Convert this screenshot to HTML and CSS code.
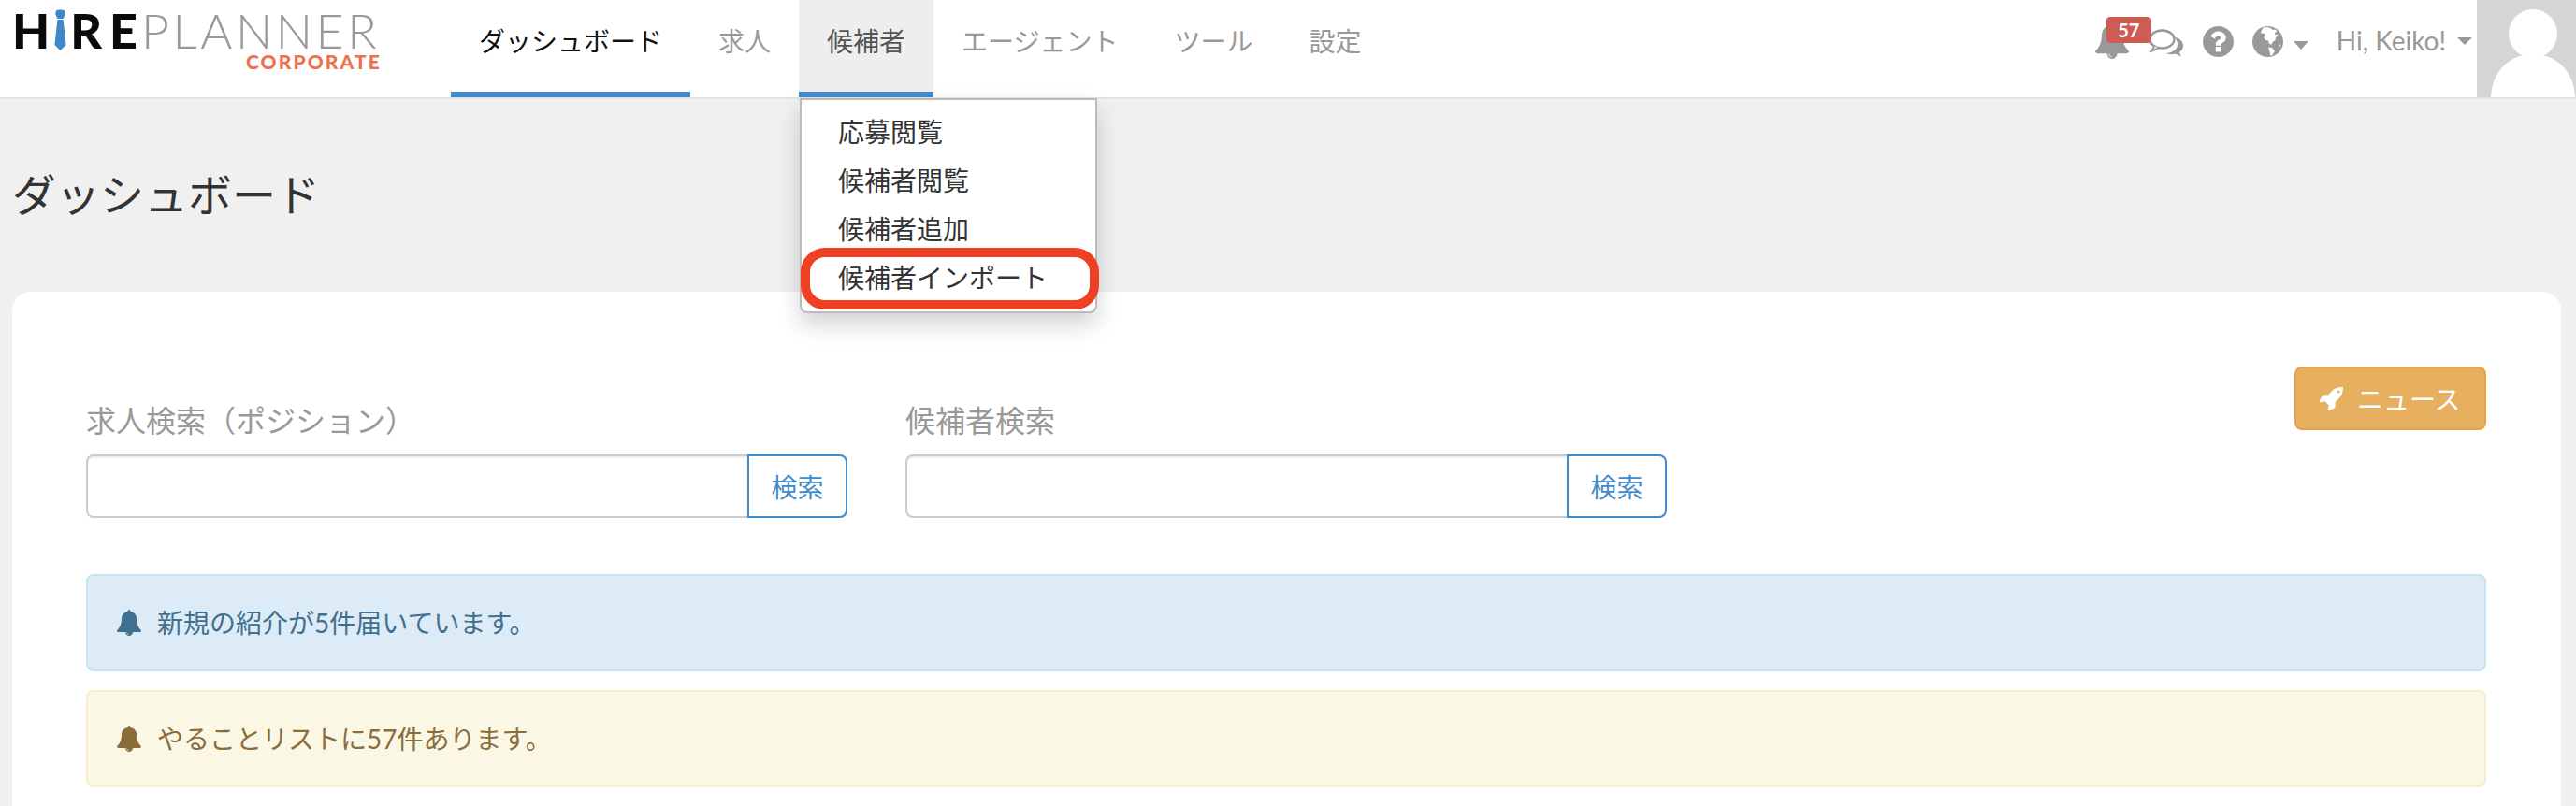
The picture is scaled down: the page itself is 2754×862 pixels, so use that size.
FILE: index.html
```html
<!DOCTYPE html>
<html lang="ja">
<head>
<meta charset="utf-8">
<title>ダッシュボード</title>
<link rel="stylesheet" href="styles.css">
</head>
<body>
<header class="navbar">
  <a class="logo">
    <span class="logo-main"><b class="logo-hire"><span>H</span><svg class="logo-tie" viewBox="0 0 13 44"><path d="M2 1.500C4 .3 9 .3 11 1.500l.8 3.500-2.300 5h-6L1.200 5z" fill="#3f87c8"/><path d="M3.400 11h6.200l3 27-6.100 6-6.100-6z" fill="#3f87c8"/></svg><span class="logo-re">RE</span></b><span class="logo-planner">PLANNER</span></span>
    <span class="logo-sub">CORPORATE</span>
  </a>
  <nav class="tabs">
    <a class="tab tab-current">ダッシュボード</a>
    <a class="tab">求人</a>
    <div class="tab-wrap">
      <a class="tab tab-open">候補者</a>
      <div class="dropdown">
        <a class="dropdown-item">応募閲覧</a>
        <a class="dropdown-item">候補者閲覧</a>
        <a class="dropdown-item">候補者追加</a>
        <a class="dropdown-item">候補者インポート</a>
        <span class="highlight"></span>
      </div>
    </div>
    <a class="tab">エージェント</a>
    <a class="tab">ツール</a>
    <a class="tab">設定</a>
  </nav>
  <div class="nav-right">
    <span class="bell-wrap">
      <svg class="ico-bell" viewBox="64 0 1664 1792"><path fill="#999" d="M912 1696q0-16-16-16-59 0-101.500-42.500t-42.500-101.500q0-16-16-16t-16 16q0 73 51.500 124.500t124.500 51.500q16 0 16-16zm816-288q0 52-38 90t-90 38h-448q0 106-75 181t-181 75-181-75-75-181h-448q-52 0-90-38t-38-90q50-42 91-88t85-119.500 74.500-158.500 50-206 19.500-260q0-152 117-282.500t307-158.500q-8-19-8-39 0-40 28-68t68-28 68 28 28 68q0 20-8 39 190 28 307 158.500t117 282.500q0 139 19.500 260t50 206 74.500 158.500 85 119.500 91 88z"/></svg>
      <span class="badge">57</span>
    </span>
    <svg class="ico-chat" viewBox="0 0 38 30"><path d="M28 9c6 1 9 5 9 9 0 3-1.500 5-4 7l1.500 4.500-6-3c-3 1-7 .8-10-.5 6-.5 12-3 12.500-9 .2-2.800-1-5.500-3-8z" fill="#999"/><ellipse cx="14.500" cy="11" rx="13" ry="9.500" fill="#fff" stroke="#999" stroke-width="2.400"/><path d="M6 18l-2.500 5.500 7-3" fill="#fff" stroke="#999" stroke-width="2"/></svg>
    <svg class="ico-help" viewBox="128 128 1536 1536"><path fill="#999" d="M1024 1376v-192q0-14-9-23t-23-9h-192q-14 0-23 9t-9 23v192q0 14 9 23t23 9h192q14 0 23-9t9-23zm256-672q0-88-55.500-163t-138.500-116-170-41q-243 0-371 213-15 24 8 42l132 100q7 6 19 6 16 0 25-12 53-68 86-92 34-24 86-24 48 0 85.500 26t37.500 59q0 38-20 61t-68 45q-63 28-115.500 86.500t-52.500 125.500v36q0 14 9 23t23 9h192q14 0 23-9t9-23q0-19 21.500-49.500t54.500-49.500q32-18 49-28.500t46-35 44.500-48 28-60.500 12.500-81zm384 192q0 209-103 385.500t-279.500 279.500-385.500 103-385.500-103-279.500-279.500-103-385.500 103-385.500 279.500-279.500 385.500-103 385.500 103 279.500 279.500 103 385.500z"/></svg>
    <svg class="ico-globe" viewBox="0 0 33 33"><circle cx="16.500" cy="16.500" r="16.500" fill="#999"/><path d="M11 1.800c2-.8 4-1 6-.5l3.500 1.200 1 1.500 3-.5 2 2-2.500 1.500.5 2.500 2-1 .8 1.500-2.500 2.500-.3 3-2.500 1-1.500 3-2.500-.5-1-3.500-3-.5-1.800-3 1.500-3-1.500-1.500-2.500.5-.5-2.500 1.500-2zM17 22.500l4 .5 3 3.500-2 3.500-2.500 2-1-4.500zM28.500 20l1.800-.5-1.300 3.500z" fill="#fff"/></svg>
    <span class="caret caret-globe"></span>
    <span class="user-name">Hi, Keiko!</span>
    <span class="caret caret-user"></span>
    <span class="avatar"><svg class="avatar-img" viewBox="0 0 106 104"><circle cx="60" cy="36" r="26" fill="#fff"/><path d="M15 104c1-26 18-46 45-46s44 20 45 46z" fill="#fff"/></svg></span>
  </div>
</header>

<main class="page">
  <h1 class="page-title">ダッシュボード</h1>
  <section class="card">
    <div class="news-row">
      <button class="btn-news"><svg class="ico-rocket" viewBox="64 64 1664 1664"><path fill="#fff" d="M1504 448q0-40-28-68t-68-28-68 28-28 68 28 68 68 28 68-28 28-68zm224-288q0 249-75.500 430.500t-253.500 360.500q-81 80-195 176l-20 379q-2 16-16 26l-384 224q-7 4-16 4-12 0-23-9l-64-64q-13-14-8-32l85-276-281-281-276 85q-3 1-9 1-14 0-23-9l-64-64q-17-19-5-39l224-384q10-14 26-16l379-20q96-114 176-195 188-187 358-258t431-71q14 0 24 9.500t10 22.500z"/></svg>ニュース</button>
    </div>
    <div class="search-row">
      <div class="search">
        <label class="search-label">求人検索（ポジション）</label>
        <div class="search-group">
          <input class="search-input" type="text">
          <button class="search-btn">検索</button>
        </div>
      </div>
      <div class="search">
        <label class="search-label">候補者検索</label>
        <div class="search-group">
          <input class="search-input" type="text">
          <button class="search-btn">検索</button>
        </div>
      </div>
    </div>
    <div class="alert alert-info">
      <svg class="ico-alert" viewBox="64 0 1664 1792"><path fill="currentColor" d="M912 1696q0-16-16-16-59 0-101.500-42.500t-42.500-101.500q0-16-16-16t-16 16q0 73 51.500 124.500t124.500 51.500q16 0 16-16zm816-288q0 52-38 90t-90 38h-448q0 106-75 181t-181 75-181-75-75-181h-448q-52 0-90-38t-38-90q50-42 91-88t85-119.500 74.500-158.500 50-206 19.500-260q0-152 117-282.500t307-158.500q-8-19-8-39 0-40 28-68t68-28 68 28 28 68q0 20-8 39 190 28 307 158.500t117 282.500q0 139 19.500 260t50 206 74.500 158.500 85 119.500 91 88z"/></svg>
      <span>新規の紹介が5件届いています。</span>
    </div>
    <div class="alert alert-warn">
      <svg class="ico-alert" viewBox="64 0 1664 1792"><path fill="currentColor" d="M912 1696q0-16-16-16-59 0-101.500-42.500t-42.500-101.500q0-16-16-16t-16 16q0 73 51.500 124.500t124.500 51.500q16 0 16-16zm816-288q0 52-38 90t-90 38h-448q0 106-75 181t-181 75-181-75-75-181h-448q-52 0-90-38t-38-90q50-42 91-88t85-119.500 74.500-158.500 50-206 19.500-260q0-152 117-282.500t307-158.500q-8-19-8-39 0-40 28-68t68-28 68 28 28 68q0 20-8 39 190 28 307 158.500t117 282.500q0 139 19.500 260t50 206 74.500 158.500 85 119.500 91 88z"/></svg>
      <span>やることリストに57件あります。</span>
    </div>
  </section>
</main>
</body>
</html>
```
FILE: styles.css
```css
* { box-sizing: border-box; }
html, body { margin: 0; height: 100%; }
body {
  background: #f0f0f0;
  font-family: Lato, "Noto Sans CJK JP", sans-serif;
  font-size: 28px;
  color: #333;
  overflow: hidden;
}
a { text-decoration: none; }

/* top bar */
.navbar {
  display: flex;
  align-items: flex-start;
  height: 106px;
  background: #fff;
  border-bottom: 2px solid #e3e3e3;
}
.logo {
  width: 482px;
  flex: none;
  padding: 7px 0 0 13px;
  display: flex;
  flex-direction: column;
}
.logo-main { display: flex; align-items: center; height: 50px; line-height: 50px; white-space: nowrap; }
.logo-hire { display: flex; align-items: center; width: 137px; font-family: Lato; font-weight: 900; font-size: 52px; color: #0a0a0a; }
.logo-tie { flex: none; width: 13px; height: 44px; margin: 0 4px 0 5px; }
.logo-re { letter-spacing: 8px; }
.logo-planner { font-family: Lato; font-weight: 300; font-size: 52px; color: #999; margin-left: 1px; letter-spacing: 3.500px; }
.logo-sub { font-family: Lato; font-weight: 900; font-size: 21px; line-height: 20px; color: #ef6f4d; letter-spacing: 2.100px; margin: -1px 0 0 250px; }

.tabs { display: flex; flex: none; }
.tab-wrap { position: relative; }
.tab {
  display: block;
  height: 104px;
  padding: 24px 30px 0;
  line-height: 40px;
  color: #999;
  white-space: nowrap;
  border-bottom: 6px solid transparent;
}
.tab-current { color: #111; border-bottom-color: #428bca; }
.tab-open { color: #555; background: #eee; border-bottom-color: #428bca; }

.dropdown {
  position: absolute;
  left: 1px;
  top: 105px;
  width: 318px;
  height: 230px;
  padding: 8px 0;
  background: #fff;
  border: 2px solid #bbb;
  border-radius: 0 0 8px 8px;
  box-shadow: 0 12px 24px rgba(0, 0, 0, .175);
  z-index: 5;
}
.dropdown-item {
  display: block;
  height: 52px;
  padding: 0 39px;
  line-height: 52px;
  color: #333;
  white-space: nowrap;
}
.highlight {
  position: absolute;
  left: -1px;
  top: 158px;
  width: 319px;
  height: 66px;
  border: 10px solid #ee4023;
  border-radius: 26px;
}

/* right-hand side of the bar */
.nav-right {
  margin-left: auto;
  display: flex;
  align-items: flex-start;
  height: 104px;
}
.bell-wrap { position: relative; display: block; width: 36px; height: 39px; margin-top: 24px; }
.ico-bell { display: block; width: 36px; height: 39px; }
.badge {
  position: absolute;
  left: 12px;
  top: -6px;
  width: 48px;
  height: 28px;
  background: #cd5c55;
  border-radius: 4px;
  color: #fff;
  font-size: 20px;
  font-weight: 700;
  line-height: 28px;
  text-align: center;
}
.ico-chat { display: block; width: 38px; height: 30px; margin: 31px 0 0 21px; }
.ico-help { display: block; width: 33px; height: 33px; margin: 28px 0 0 20px; }
.ico-globe { display: block; width: 33px; height: 33px; margin: 28px 0 0 20px; }
.caret {
  display: block;
  width: 0;
  height: 0;
  border-style: solid;
  border-color: #999 transparent transparent;
}
.caret-globe { border-width: 9px 8px 0; margin: 44px 0 0 11px; }
.user-name { color: #999; line-height: 40px; margin: 23px 0 0 30px; white-space: nowrap; }
.caret-user { border-width: 8px 8px 0; margin: 40px 0 0 12px; }
.avatar { display: block; width: 106px; height: 104px; margin-left: 5px; background: #d5d5d5; }
.avatar-img { display: block; width: 106px; height: 104px; }

/* page */
.page { padding: 0 16px 0 13px; }
.page-title {
  margin: 67px 0 0;
  height: 139px;
  font-size: 47px;
  line-height: 70px;
  font-weight: 400;
  color: #333;
}
.card {
  position: relative;
  height: 600px;
  padding: 80px 80px 0 79px;
  background: #fff;
  border-radius: 20px;
}
.news-row { display: flex; justify-content: flex-end; height: 0; }
.btn-news {
  display: flex;
  align-items: center;
  flex: none;
  width: 205px;
  height: 68px;
  padding: 0 0 0 24px;
  background: #e7af60;
  border: 2px solid #e3a24c;
  border-radius: 8px;
  color: #fff;
  font: inherit;
}
.ico-rocket { width: 26px; height: 26px; margin-right: 15px; }
.search-row { display: flex; gap: 62px; padding-top: 36px; }
.search { width: 814px; }
.search-label { display: block; height: 58px; font-size: 32px; line-height: 44px; color: #999; }
.search-group { display: flex; height: 68px; }
.search-input {
  flex: 1;
  min-width: 0;
  border: 2px solid #ccc;
  border-right: 0;
  border-radius: 8px 0 0 8px;
  background: #fff;
  box-shadow: inset 0 2px 2px rgba(0, 0, 0, .075);
}
.search-btn {
  flex: none;
  width: 107px;
  padding: 0;
  background: #fff;
  border: 2px solid #428bca;
  border-radius: 0 8px 8px 0;
  color: #428bca;
  font: inherit;
}
.alert {
  display: flex;
  align-items: center;
  height: 104px;
  padding: 0 31px;
  border: 2px solid;
  border-radius: 8px;
  line-height: 40px;
}
.ico-alert { width: 26px; height: 28px; margin-right: 17px; }
.alert-info { margin-top: 60px; background: #ddebf6; border-color: #c5e6f0; color: #41708f; }
.alert-warn { margin-top: 20px; background: #fbf7e5; border-color: #f9ebd2; color: #8a6d3b; }
```
